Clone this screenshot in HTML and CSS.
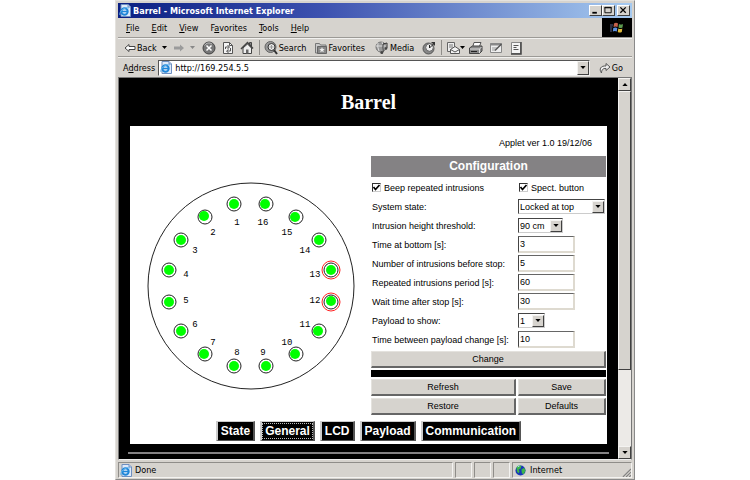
FILE: index.html
```
<!DOCTYPE html>
<html lang="en">
<head>
<meta charset="utf-8">
<title>Barrel - Microsoft Internet Explorer</title>
<link rel="stylesheet" href="styles.css">
</head>
<body>
<svg class="defs" aria-hidden="true">
  <symbol id="ie" viewBox="0 0 12 13">
    <path d="M2 .5h7l2.500 2.500v9.500H2z" fill="#dfeafa" stroke="#6e8fc0"/>
    <path d="M9 .5v2.500h2.500" fill="#cfdcf2" stroke="#6e8fc0"/>
    <circle cx="5.500" cy="7.500" r="3.200" fill="none" stroke="#1f86d8" stroke-width="2"/>
    <path d="M3 7.500h6" stroke="#1f86d8" stroke-width="1.500"/>
    <path d="M1 11C-.5 8 6 2 10 4" fill="none" stroke="#62b5ee"/>
  </symbol>
  <symbol id="down" viewBox="0 0 7 4"><path d="M0 0h7L3.500 4z"/></symbol>
  <symbol id="up" viewBox="0 0 7 4"><path d="M0 4h7L3.500 0z"/></symbol>
</svg>
<div class="window">
  <header class="titlebar">
    <svg class="ie"><use href="#ie"/></svg>
    <span class="caption">Barrel - Microsoft Internet Explorer</span>
    <button class="winbtn" aria-label="Minimize"><svg viewBox="0 0 11 10"><path d="M2 7.500h5" stroke="#000" stroke-width="2"/></svg></button>
    <button class="winbtn" aria-label="Maximize"><svg viewBox="0 0 11 10"><path d="M1.500 1.500h7v6h-7zM1 2h8" fill="none" stroke="#000"/></svg></button>
    <button class="winbtn close" aria-label="Close"><svg viewBox="0 0 11 10"><path d="M2 1.500l6 6M8 1.500l-6 6" stroke="#000" stroke-width="1.400"/></svg></button>
  </header>
  <nav class="menubar">
    <button><u>F</u>ile</button>
    <button><u>E</u>dit</button>
    <button><u>V</u>iew</button>
    <button>F<u>a</u>vorites</button>
    <button><u>T</u>ools</button>
    <button><u>H</u>elp</button>
    <span class="brand"><svg viewBox="0 0 14 12">
      <path d="M4 1.500q2-1.500 4 0L7.500 5q-2-1-4 0z" fill="#c4614a"/>
      <path d="M9 2q2 1 4 0l-.5 3.500q-2 1-4 0z" fill="#5d9a50"/>
      <path d="M3.300 6q2-1 4 0L6.800 9.500q-2-1-4 0z" fill="#5b8fe0"/>
      <path d="M8.300 6.500q2 1 4 0l-.5 3.500q-2 1-4 0z" fill="#dcb93c"/>
      <path d="M0 3h3M0 5h2.500M0 7h2M0 9h2" stroke="#575e86"/>
    </svg></span>
  </nav>
  <div class="toolbar">
    <button><svg class="i12" viewBox="0 0 12 12"><path d="M1 6l4-3.500v2h6v3H5v2z" fill="#fff" stroke="#444"/></svg>Back</button>
    <svg class="caret"><use href="#down"/></svg>
    <button class="fwd" aria-label="Forward"><svg class="i12" viewBox="0 0 12 12"><path d="M11 6L7 2.500v2H1v3h6v2z" fill="#9b9b9b"/></svg></button>
    <svg class="caret dim"><use href="#down"/></svg>
    <button class="stop" aria-label="Stop"><svg class="i14" viewBox="0 0 14 14"><circle cx="7" cy="7" r="6" fill="#777" stroke="#444"/><path d="M2.500 4.500A5 5 0 0 1 10 3" stroke="#bbb" fill="none"/><path d="M4.500 4.500l5 5M9.500 4.500l-5 5" stroke="#fff" stroke-width="1.500"/></svg></button>
    <button class="refresh" aria-label="Refresh page"><svg class="i14" viewBox="0 0 14 14"><path d="M2.500 1.500h6l3 3v8h-9z" fill="#f5f5f5" stroke="#555"/><path d="M8.500 1.500v3h3" fill="none" stroke="#555"/><path d="M4.500 8V6H8M6.500 4l2 2-2 2M9.500 7v3H6M7.500 8.500l-2 1.500 2 2" fill="none" stroke="#555"/></svg></button>
    <button class="home" aria-label="Home"><svg class="i14" viewBox="0 0 14 14"><path d="M9.500 1.500h2v5h-2z" fill="#888" stroke="#444"/><path d="M3 7v5.500h8.500V7L7.500 3z" fill="#eee" stroke="#444"/><path d="M1 8l6.500-6.500L13 7.500" fill="none" stroke="#444" stroke-width="1.500"/><path d="M6 8.500h2.500v4H6z" fill="#666"/></svg></button>
    <span class="rule"></span>
    <button class="search"><svg class="i14" viewBox="0 0 14 14"><circle cx="6.500" cy="6" r="5.500" fill="#999" stroke="#666"/><circle cx="7.500" cy="6" r="3.500" fill="#e8e8e8" stroke="#333"/><path d="M5.500 6h4M7.500 4v4" stroke="#999"/><path d="M10 9l3 4" stroke="#333" stroke-width="2"/></svg>Search</button>
    <button class="fav"><svg class="i12" viewBox="0 0 12 12"><path d="M.5 1.500h4l1 1.500h5.500v8H.5z" fill="#c9c9c9" stroke="#777"/><path d="M2.500 4.500h9v7h-9z" fill="#888" stroke="#666"/><path d="M7 5l.8 2h2L8.200 8.300l.6 2L7 9.200l-1.800 1.100.6-2L4.200 7h2z" fill="#eee"/></svg>Favorites</button>
    <button class="media"><svg class="i14" viewBox="0 0 14 14"><circle cx="6" cy="6" r="5" fill="#999" stroke="#777"/><path d="M1 5h10M3 2q-1 4 1 8M7 1q3 5 0 10" stroke="#ddd" fill="none"/><path d="M8 11V3l4-1v5" fill="none" stroke="#333"/><circle cx="6.800" cy="11.500" r="1.500" fill="#444"/><circle cx="11" cy="7.500" r="1.300" fill="#444"/></svg>Media</button>
    <button class="history" aria-label="History"><svg class="i14" viewBox="0 0 14 14"><circle cx="6.500" cy="7.500" r="5.500" fill="#888" stroke="#555"/><circle cx="7.500" cy="6.500" r="3.800" fill="#eee" stroke="#666"/><path d="M7.500 4v3l4-4" fill="none" stroke="#222"/><path d="M9 1h4v4z" fill="#333"/></svg></button>
    <span class="rule"></span>
    <button class="mail" aria-label="Mail"><svg class="i14" viewBox="0 0 14 14"><path d="M1.500 1.500h7v9h-7z" fill="#eee" stroke="#666"/><path d="M3 4h4M3 6h4" stroke="#777"/><path d="M4.500 8.500L9 5.500l4.500 3v4h-9z" fill="#f4f4f4" stroke="#555"/><path d="M4.500 8.500L9 11l4.500-2.500" fill="none" stroke="#555"/></svg></button>
    <svg class="caret"><use href="#down"/></svg>
    <button class="print" aria-label="Print"><svg class="i14" viewBox="0 0 14 14"><path d="M5 1.500h7l-2 5H3.500z" fill="#fff" stroke="#555"/><path d="M.5 7l3-2h9.500v5l-2.500 2.500H.5z" fill="#888" stroke="#444"/><path d="M1 8h9.500M10.500 12V8l2-2" stroke="#ddd" fill="none"/><path d="M2 10.500h6" stroke="#222"/></svg></button>
    <button class="edit" aria-label="Edit page"><svg class="i14" viewBox="0 0 14 14"><path d="M1.500 2.500h11v9h-11z" fill="#eee" stroke="#888"/><path d="M1 3.500h12" stroke="#888" stroke-width="2"/><path d="M3 7h5M3 9h3" stroke="#999"/><path d="M6 9.500L12.500 3" stroke="#555" stroke-width="1.500"/></svg></button>
    <button class="discuss" aria-label="Discuss"><svg class="i14" viewBox="0 0 14 14"><path d="M2.500 1.500h9v11h-9z" fill="#f4f4f4" stroke="#888"/><path d="M12 1v12H2" fill="none" stroke="#444" stroke-width="1.500"/><path d="M4.500 4.500h5M4.500 6.500h3M4.500 8.500h5" stroke="#555"/></svg></button>
  </div>
  <div class="addressbar">
    <label for="url">A<u>d</u>dress</label>
    <span class="urlbox">
      <svg class="ie"><use href="#ie"/></svg>
      <input id="url" value="http://169.254.5.5">
      <button class="arrow" aria-label="Show addresses"><svg><use href="#down"/></svg></button>
    </span>
    <button class="go"><svg class="i12" viewBox="0 0 12 12"><path d="M2.500 11C-.5 7 2 3.500 7 4V1.500l4 3.500-4 3.500V6.500C4 6 2.500 8 2.500 11z" fill="#eee" stroke="#555"/></svg>Go</button>
  </div>
  <div class="view">
    <main class="page">
      <h1>Barrel</h1>
      <section class="applet">
        <p class="version">Applet ver 1.0 19/12/06</p>
        <div class="columns">
          <svg class="barrel" viewBox="0 0 208 208" role="img" aria-label="Barrel sensors">
            <circle cx="104" cy="104" r="103" class="ring"/>
            <g class="ring">
              <circle cx="87" cy="22" r="7"/><circle cx="58" cy="35" r="7"/><circle cx="34" cy="58" r="7"/><circle cx="22" cy="88" r="7"/>
              <circle cx="22" cy="120" r="7"/><circle cx="34" cy="149" r="7"/><circle cx="58" cy="172" r="7"/><circle cx="87" cy="184" r="7"/>
              <circle cx="119" cy="184" r="7"/><circle cx="149" cy="172" r="7"/><circle cx="172" cy="149" r="7"/><circle cx="184" cy="120" r="7"/>
              <circle cx="184" cy="88" r="7"/><circle cx="172" cy="58" r="7"/><circle cx="149" cy="35" r="7"/><circle cx="119" cy="22" r="7"/>
            </g>
            <g class="alarm"><circle cx="184" cy="88" r="9"/><circle cx="184" cy="120" r="9"/></g>
            <g class="lamp">
              <circle cx="87" cy="22" r="5"/><circle cx="57" cy="34" r="5"/><circle cx="34" cy="58" r="5"/><circle cx="22" cy="88" r="5"/>
              <circle cx="22" cy="120" r="5"/><circle cx="34" cy="149" r="5"/><circle cx="57" cy="172" r="5"/><circle cx="87" cy="184" r="5"/>
              <circle cx="119" cy="184" r="5"/><circle cx="148" cy="172" r="5"/><circle cx="171" cy="149" r="5"/><circle cx="184" cy="119" r="5"/>
              <circle cx="184" cy="88" r="5"/><circle cx="172" cy="58" r="5"/><circle cx="148" cy="35" r="5"/><circle cx="118" cy="22" r="5"/>
            </g>
            <g class="num">
              <text x="90" y="43">1</text><text x="66" y="53">2</text><text x="48" y="71">3</text><text x="39" y="95">4</text>
              <text x="39" y="121">5</text><text x="48" y="145">6</text><text x="66" y="163">7</text><text x="90" y="173">8</text>
              <text x="116" y="173">9</text><text x="140" y="163">10</text><text x="158" y="145">11</text><text x="168" y="121">12</text>
              <text x="168" y="95">13</text><text x="158" y="71">14</text><text x="140" y="53">15</text><text x="116" y="43">16</text>
            </g>
          </svg>
          <form class="config">
            <h2>Configuration</h2>
            <label class="check"><input type="checkbox" checked><svg viewBox="0 0 9 9"><path d="M1.500 4l2 2.500L7.500 2" fill="none" stroke="#000" stroke-width="1.700"/></svg>Beep repeated intrusions</label>
            <label class="check"><input type="checkbox" checked><svg viewBox="0 0 9 9"><path d="M1.500 4l2 2.500L7.500 2" fill="none" stroke="#000" stroke-width="1.700"/></svg>Spect. button</label>
            <label for="state">System state:</label>
            <span class="pick wide"><select id="state"><option>Locked at top</option></select><span class="arrow"><svg><use href="#down"/></svg></span></span>
            <label for="height">Intrusion height threshold:</label>
            <span class="pick medium"><select id="height"><option>90 cm</option></select><span class="arrow"><svg><use href="#down"/></svg></span></span>
            <label for="bottom">Time at bottom [s]:</label>
            <input class="field" id="bottom" value="3">
            <label for="count">Number of intrusions before stop:</label>
            <input class="field" id="count" value="5">
            <label for="period">Repeated intrusions period [s]:</label>
            <input class="field" id="period" value="60">
            <label for="wait">Wait time after stop [s]:</label>
            <input class="field" id="wait" value="30">
            <label for="payload">Payload to show:</label>
            <span class="pick small"><select id="payload"><option>1</option></select><span class="arrow"><svg><use href="#down"/></svg></span></span>
            <label for="between">Time between payload change [s]:</label>
            <input class="field" id="between" value="10">
            <button type="button" class="push full">Change</button>
            <div class="bar"></div>
            <button type="button" class="push">Refresh</button>
            <button type="button" class="push">Save</button>
            <button type="button" class="push">Restore</button>
            <button type="button" class="push">Defaults</button>
          </form>
        </div>
        <nav class="tabs">
          <button>State</button>
          <button class="current">General</button>
          <button>LCD</button>
          <button>Payload</button>
          <button>Communication</button>
        </nav>
      </section>
      <hr>
    </main>
    <div class="scroll">
      <button class="arrow" aria-label="Scroll up"><svg><use href="#up"/></svg></button>
      <div class="thumb"></div>
      <div class="track"></div>
      <button class="arrow" aria-label="Scroll down"><svg><use href="#down"/></svg></button>
    </div>
  </div>
  <footer class="status">
    <span class="pane message"><svg class="ie"><use href="#ie"/></svg>Done</span>
    <span class="pane"></span>
    <span class="pane"></span>
    <span class="pane"></span>
    <span class="pane zone"><svg class="globe" viewBox="0 0 12 12"><circle cx="6" cy="6" r="5.500" fill="#1738b8"/><path d="M2 2q3-2.500 5-1L6 4 4 5l1 2-1 2Q1 7 2 2zM7 5l3-2 1.500 3-2 4-2-1z" fill="#3bb54a"/><path d="M3 2l2-1" stroke="#b6e4ff"/></svg>Internet
      <svg class="grip" viewBox="0 0 10 10"><path d="M10 1l-9 9M10 4.500L4.500 10M10 8l-2 2" stroke="#808080" stroke-width="1.200"/></svg></span>
  </footer>
</div>
</body>
</html>
```
FILE: styles.css
```
* { box-sizing: border-box; }

body {
  margin: 0;
  background: #fff;
  color: #000;
  font: 9px/12px "DejaVu Sans Condensed", "DejaVu Sans", sans-serif;
}

button, input, select {
  margin: 0;
  padding: 0;
  border: 0;
  border-radius: 0;
  background: none;
  color: inherit;
  font: inherit;
  appearance: none;
  outline: 0;
}

svg { display: block; flex: none; }
.defs { position: absolute; width: 0; height: 0; }
.ie { width: 12px; height: 13px; }
.i12 { width: 12px; height: 12px; }
.i14 { width: 14px; height: 14px; }

.window {
  display: flex;
  flex-direction: column;
  max-width: 520px;
  min-height: calc(100vh - 1px);
  margin: 0 auto;
  padding: 2px 2px 1px;
  border: 1px solid #e4e2de;
  border-right-color: #8a8a8a;
  border-bottom-color: #8a8a8a;
  background: #d6d3ce;
}

/* Title bar */
.titlebar {
  display: flex;
  align-items: center;
  height: 15px;
  padding: 0 2px 0 1px;
  background: linear-gradient(90deg, #0a1f82, #3d52b0 40%, #a6caf0);
  color: #fff;
  font-weight: bold;
}
.caption { flex: 1; padding-left: 2px; white-space: nowrap; }
.winbtn {
  width: 13px;
  height: 11px;
  border: 1px solid;
  border-color: #fff #404040 #404040 #fff;
  background: #d6d3ce;
}
.winbtn svg { width: 11px; height: 9px; }
.close { margin-left: 2px; }

/* Menu, toolbar and address rows */
.menubar, .toolbar, .addressbar { display: flex; align-items: center; }
.menubar {
  height: 20px;
  gap: 12px;
  padding-left: 8px;
  border-bottom: 1px solid #9c9a96;
}
.brand {
  display: flex;
  align-items: center;
  justify-content: center;
  align-self: stretch;
  width: 30px;
  margin-left: auto;
  background: #000;
}
.brand svg { width: 14px; height: 12px; }
.toolbar {
  height: 19px;
  padding-left: 6px;
  border-top: 1px solid #f2f1ef;
  border-bottom: 1px solid #9c9a96;
}
.toolbar button, .go { display: flex; align-items: center; gap: 1px; }
.caret { width: 5px; height: 3px; margin-left: 5px; }
.dim { fill: #888; }
.fwd { margin-left: 6px; }
.stop { margin-left: 7px; }
.refresh, .home { margin-left: 5px; }
.rule { width: 1px; height: 15px; margin: 0 5px; background: #8f8d89; }
.home + .rule { margin-right: 4px; }
.fav { margin-left: 9px; }
.media { margin-left: 10px; }
.history { margin-left: 8px; }
.history + .rule { margin-right: 4px; }
.mail + .caret { margin-left: 0; }
.print { margin-left: 4px; }
.edit, .discuss { margin-left: 6px; }
.addressbar {
  height: 20px;
  padding: 0 9px 0 5px;
  gap: 3px;
  border-top: 1px solid #f2f1ef;
}
.urlbox {
  display: flex;
  flex: 1;
  align-items: center;
  height: 16px;
  padding-left: 1px;
  border: 1px solid;
  border-color: #555 #eee #eee #555;
  background: #fff;
}
.urlbox input { flex: 1; min-width: 0; padding-left: 3px; }
.go { margin-left: 6px; }

.arrow {
  display: flex;
  align-items: center;
  justify-content: center;
  width: 12px;
  height: 12px;
  flex: none;
  border: 1px solid;
  border-color: #f4f3f1 #404040 #404040 #f4f3f1;
  background: #d6d3ce;
}
.arrow svg { width: 6px; height: 3px; }
.urlbox .arrow { height: 14px; }

/* Web page */
.view { display: flex; flex: 1; border: 1px solid #777; border-bottom-color: #eee; }
.page { flex: 1; padding: 0 11px; background: #000; }
h1 {
  margin: 0;
  color: #fff;
  font: bold 20px/48px "Liberation Serif", serif;
  text-align: center;
}
.applet {
  padding: 11px 1px 3px;
  background: #fff;
  font-family: "Liberation Sans", sans-serif;
}
.version { margin: 0 14px 7px; text-align: right; }
.columns { display: flex; align-items: center; }
.barrel { flex: 1; height: 208px; }
.ring { fill: none; stroke: #222; stroke-width: 1; }
.alarm { fill: none; stroke: #f22; }
.lamp { fill: #0f0; }
.num { font: 9px "Liberation Mono", monospace; text-anchor: middle; }

.config {
  display: grid;
  grid-template-columns: 145px 88px;
  grid-template-rows: 22px repeat(9, 19px) 19px 10px;
  grid-auto-rows: 19px;
  align-items: center;
  column-gap: 2px;
}
h2 {
  grid-column: 1 / -1;
  margin: 0 0 1px;
  background: #848284;
  color: #fff;
  font: bold 12px/21px "Liberation Sans", sans-serif;
  text-align: center;
}
.config label { padding-left: 1px; white-space: nowrap; }
.check { display: flex; position: relative; align-items: center; gap: 3px; }
.check input {
  width: 9px;
  height: 9px;
  border: 1px solid;
  border-color: #333 #ccc #ccc #333;
  background: #fff;
}
.check svg { position: absolute; left: 1px; width: 9px; height: 9px; }
.field {
  width: 57px;
  height: 17px;
  padding: 0 0 1px 1px;
  border: 1px solid;
  border-color: #666 #dedad0 #dedad0 #444;
  border-bottom-width: 2px;
  border-right-width: 2px;
  background: #fff;
}
.pick {
  display: flex;
  align-items: center;
  height: 15px;
  border: 1px solid;
  border-color: #444 #ccc #ccc #444;
}
.pick select { flex: 1; min-width: 0; padding-left: 1px; }
.wide { width: 87px; }
.medium { width: 45px; }
.small { width: 27px; }
.push {
  height: 17px;
  border: 1px solid;
  border-color: #e4e2de #666 #666 #e4e2de;
  border-width: 1px 2px 2px 1px;
  background: #d6d3ce;
}
.full { grid-column: 1 / -1; }
.bar { grid-column: 1 / -1; height: 7px; background: #000; }
.full, .bar { margin-top: 1px; }

.tabs {
  display: flex;
  justify-content: center;
  gap: 5px;
  margin-top: 5px;
}
.tabs button {
  height: 20px;
  padding: 0 3px;
  border: 1px solid;
  border-color: #ccc #555 #555 #ccc;
  border-width: 1px 2px;
  background: #000;
  color: #fff;
  font-size: 12px;
  font-weight: bold;
}
.tabs .current { outline: 1px dotted #bbb; outline-offset: -3px; }
hr {
  height: 2px;
  margin: 8px -2px 5px;
  border: 0;
  background: #848284;
}

.scroll { display: flex; flex-direction: column; width: 13px; background: #eceae7; }
.scroll .arrow { width: 13px; height: 13px; }
.thumb {
  flex: 279;
  border: 1px solid;
  border-color: #f4f3f1 #404040 #404040 #f4f3f1;
  background: #d6d3ce;
}
.track { flex: 77; }

/* Status bar */
.status { display: flex; height: 18px; gap: 2px; padding-top: 2px; }
.pane {
  display: flex;
  align-items: center;
  width: 17px;
  border: 1px solid;
  border-color: #8f8d89 #f4f3f1 #f4f3f1 #8f8d89;
}
.message { flex: 1; padding-left: 1px; gap: 3px; }
.zone { width: 120px; padding-left: 2px; gap: 4px; }
.globe { width: 11px; height: 11px; }
.grip { width: 9px; height: 9px; margin: auto 0 0 auto; }
```
